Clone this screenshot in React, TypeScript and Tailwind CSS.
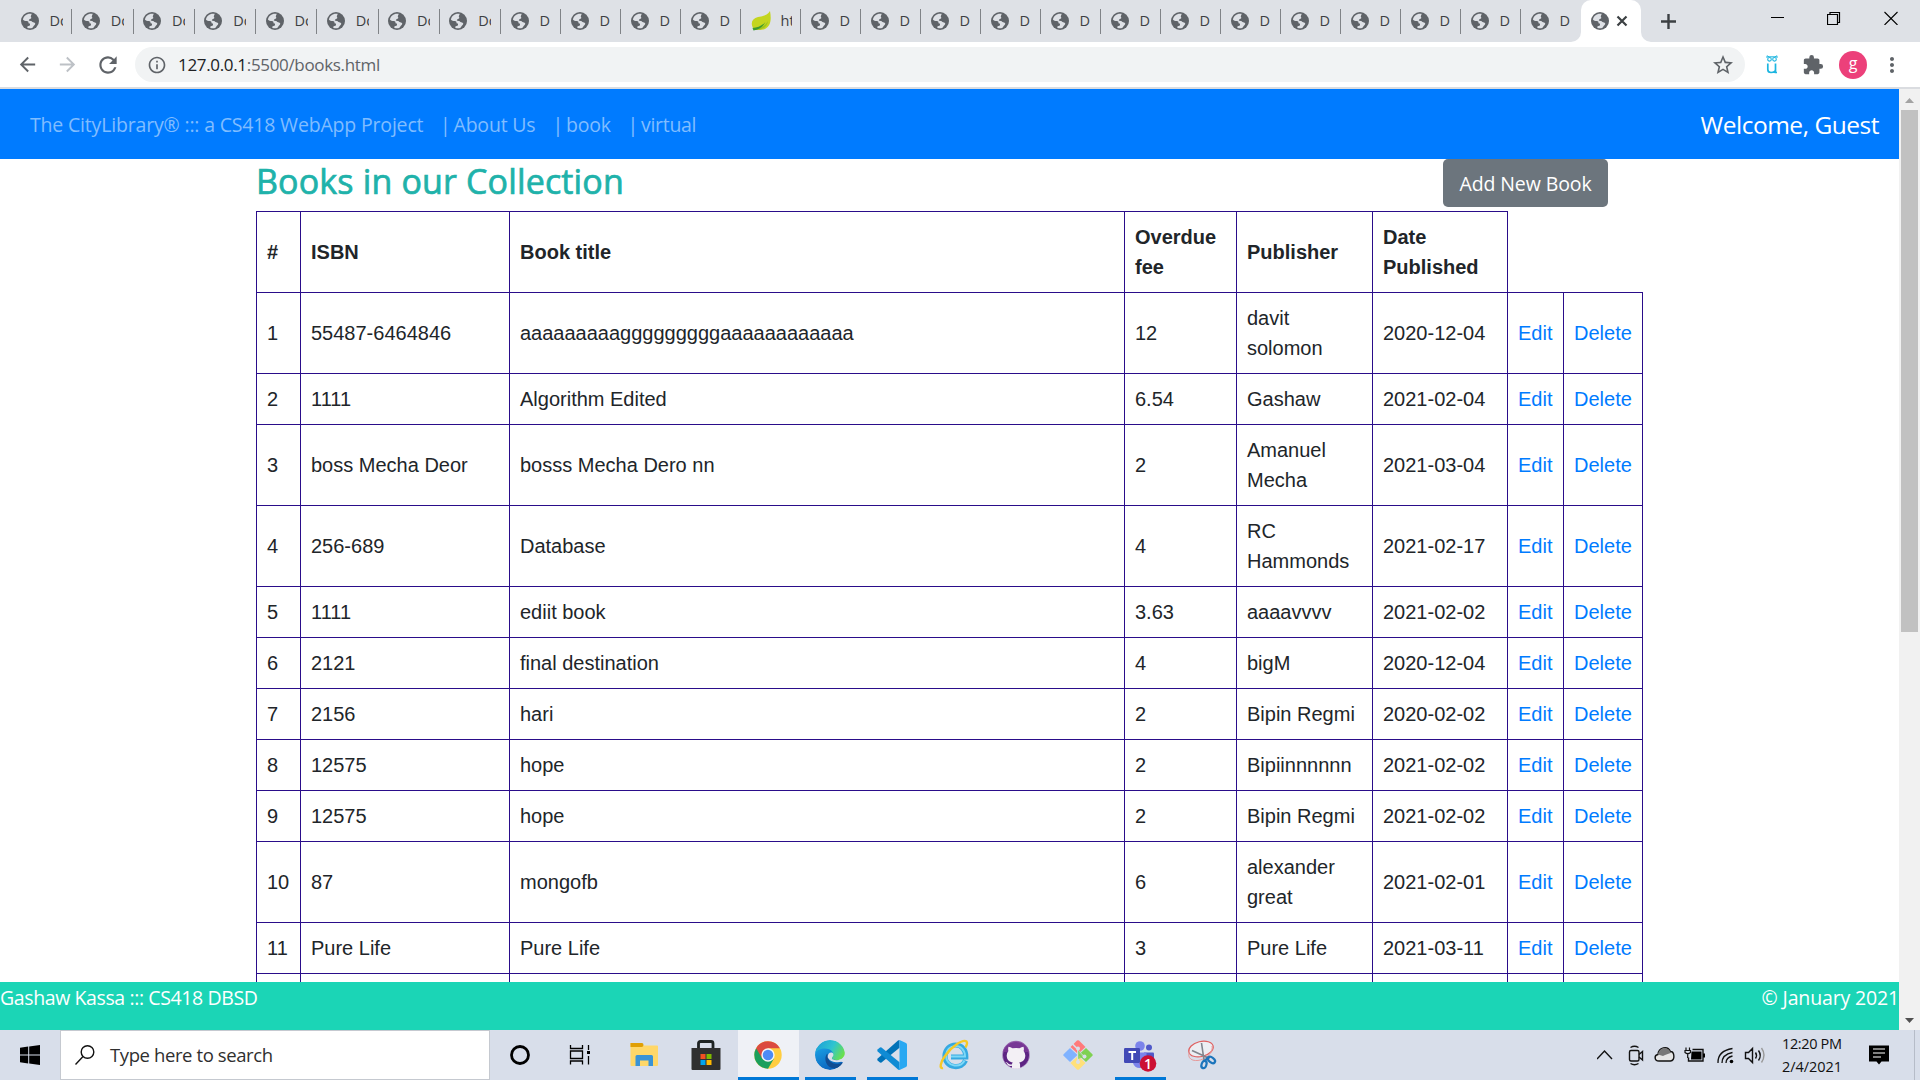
import type { ReactNode } from 'react'
import { MdRefresh, MdStarOutline, MdExtension, MdMoreVert, MdArrowBack, MdArrowForward, MdInfoOutline } from 'react-icons/md'

const UI = "font-['Open_Sans',sans-serif]"

const books = [
  ['1', '55487-6464846', 'aaaaaaaaagggggggggaaaaaaaaaaaa', '12', 'davit solomon', '2020-12-04'],
  ['2', '1111', 'Algorithm Edited', '6.54', 'Gashaw', '2021-02-04'],
  ['3', 'boss Mecha Deor', 'bosss Mecha Dero nn', '2', 'Amanuel Mecha', '2021-03-04'],
  ['4', '256-689', 'Database', '4', 'RC Hammonds', '2021-02-17'],
  ['5', '1111', 'ediit book', '3.63', 'aaaavvvv', '2021-02-02'],
  ['6', '2121', 'final destination', '4', 'bigM', '2020-12-04'],
  ['7', '2156', 'hari', '2', 'Bipin Regmi', '2020-02-02'],
  ['8', '12575', 'hope', '2', 'Bipiinnnnnn', '2021-02-02'],
  ['9', '12575', 'hope', '2', 'Bipin Regmi', '2021-02-02'],
  ['10', '87', 'mongofb', '6', 'alexander great', '2021-02-01'],
  ['11', 'Pure Life', 'Pure Life', '3', 'Pure Life', '2021-03-11'],
]

const headers = ['#', 'ISBN', 'Book title', 'Overdue fee', 'Publisher', 'Date Published']

function Globe() {
  return (
    <svg viewBox="0 0 18 18" className="h-[18px] w-[18px] shrink-0">
      <circle cx="9" cy="9" r="9" fill="#5f6368" />
      <path
        d="M10.6 1.8C6 1 2.6 3.8 1.9 7.6c.9 1 2.200 1.500 3.900 1.500 1.500 0 1.600.8 1.700 1.700.1.600.7.800 1.500.900v1.400c0 .8-1.300 1-2.200 1.100-.5 0-.6.8-.5 1.600 1.600.700 3.200.700 4.800.2 1-.7 1.300-1.500 1.800-2.200.6-.8 1.400-1.200 1.300-2.200-.1-.9-1-1.300-2-1.400-1-.1-1.300-.8-2-1.200-.7-.3-1.900.1-2.300-.5-.3-.6.4-1.300 1.100-1.600.8-.300 1.200-.4 1.300-1 .1-.7-.6-1-.5-1.600.1-.7.600-1.300.8-2.100z"
        fill="#dee1e6"
      />
    </svg>
  )
}

function Leaf() {
  return (
    <svg viewBox="0 0 20 20" className="h-5 w-5 shrink-0">
      <path d="M19 0c1.500 8 1 15-5 18-4 1.500-8 1-11.500 0C-1 12 1 7.500 7 6 12 5 16.500 4.500 19 0z" fill="#c4d51f" />
      <path d="M3 18.500c6-.5 11-3.500 14-8.500-1 6.500-6 9.500-14 8.500z" fill="#9cc31f" />
      <path d="M1.500 17c5-.5 9.500-2 13-6-2.500 5-6.500 7.500-12 8.500z" fill="#3d9a2f" />
    </svg>
  )
}

function TabStrip() {
  return (
    <div className="flex h-[42px] w-full bg-[#dee1e6] pl-[11px]">
      {Array.from({ length: 26 }, (_, i) => (
        <div key={i} className={`flex h-full shrink-0 items-center ${i < 8 ? 'w-[61.25px]' : 'w-[60px]'}`}>
          <div className="flex h-full min-w-0 flex-1 items-center overflow-hidden pl-[9.5px]">
            {i === 12 ? <Leaf /> : <Globe />}
            <span
              className={`flex h-5 items-center overflow-hidden text-[14.500px] text-[#3c4043] ${UI} ${i === 12 ? 'ml-[10px] w-[11px]' : i < 8 ? 'ml-[11px] w-[13px]' : 'ml-[11px] w-[11px]'}`}
            >
              {i === 12 ? 'ht' : i < 8 ? 'Do' : 'D'}
            </span>
          </div>
          {i < 25 && <div className="h-[25px] w-px bg-[#808387]" />}
        </div>
      ))}
      <div className="relative flex h-full w-[60px] shrink-0 items-center rounded-t-[10px] bg-white pl-[10px]">
        <svg viewBox="0 0 80 10" className="absolute bottom-0 -left-[10px] h-[10px] w-[80px]">
          <path d="M0 10A10 10 0 0 0 10 0V10zM80 10A10 10 0 0 1 70 0V10z" fill="#fff" />
        </svg>
        <Globe />
        <svg viewBox="0 0 12 12" className="ml-[7px] h-3 w-3">
          <path d="M1.500 1.500l9 9M10.500 1.500l-9 9" stroke="#3c4043" strokeWidth="2.200" />
        </svg>
      </div>
      <svg viewBox="0 0 15 15" className="mt-[13.500px] ml-[20px] h-[15px] w-[15px]">
        <path d="M7.500 0v15M0 7.500h15" stroke="#3c4043" strokeWidth="2.400" />
      </svg>
      <div className="mt-[11px] mr-[21px] ml-auto flex items-start">
        <svg viewBox="0 0 14 14" className="mr-[42px] h-[14px] w-[14px]">
          <path d="M0 6.500h13" stroke="#000" />
        </svg>
        <svg viewBox="0 0 14 14" className="mr-[43px] h-[14px] w-[14px]">
          <path d="M.5 3.500h10v10H.5zM3 3V1.500h9.500v10H11" fill="none" stroke="#000" strokeWidth="1.200" />
        </svg>
        <svg viewBox="0 0 14 14" className="mr-px h-[14px] w-[14px]">
          <path d="M.5 1l13 13M13.500 1L.5 14" stroke="#000" strokeWidth="1.100" />
        </svg>
      </div>
    </div>
  )
}

function Toolbar() {
  return (
    <div className="flex h-[47px] w-full items-center border-b-2 border-[#dadce0] bg-white pl-[16px] text-[#5f6368]">
      <MdArrowBack className="h-[23px] w-[23px]" />
      <MdArrowForward className="ml-[17px] h-[23px] w-[23px] text-[#bdc1c6]" />
      <MdRefresh className="ml-[16px] h-[26px] w-[26px]" />
      <div className="ml-[14px] flex h-[35px] w-[1610px] items-center rounded-full bg-[#f1f3f4] pr-[10px] pl-[12px]">
        <MdInfoOutline className="h-5 w-5" />
        <div className={`ml-[11px] text-[17px] tracking-[-0.33px] ${UI}`}>
          <span className="text-[#202124]">127.0.0.1</span>:5500/books.html
        </div>
        <MdStarOutline className="ml-auto h-6 w-6" />
      </div>
      <svg viewBox="0 0 12 19" className="ml-[21px] h-[19px] w-3">
        <g fill="none" stroke="#1cb5e0">
          <circle cx="3.500" cy="4.300" r="1.800" strokeWidth="1.100" />
          <circle cx="8.500" cy="4.300" r="1.800" strokeWidth="1.100" />
          <path d="M1 3V.8L3 1.800h6L11 .8V3" strokeWidth="1" />
          <path d="M1.800 8.500v6q0 3 3.200 3 4.500 0 4.500-3V8.500v9h1.500" strokeWidth="1.700" />
        </g>
      </svg>
      <MdExtension className="ml-[24px] h-[22px] w-[22px]" />
      <div className={`ml-[15px] flex h-7 w-7 items-center justify-center rounded-full bg-[#ec407a] pb-[3px] text-[16px] leading-none text-white ${UI}`}>g</div>
      <MdMoreVert className="ml-[13px] h-6 w-6" />
    </div>
  )
}

function NavLink({ children, className }: { children: ReactNode; className: string }) {
  return (
    <a className={`flex whitespace-nowrap ${className}`}>
      <span className="flex w-[15px] pl-[1.500px]">|</span>
      <span>{children}</span>
    </a>
  )
}

function Navbar() {
  return (
    <nav className={`flex h-[70px] shrink-0 items-center bg-[#007bff] pt-[2px] pr-[20px] pl-[30px] text-[19.500px] text-[#80bdff] ${UI}`}>
      <a className="w-[408.500px] tracking-[-0.18px] whitespace-nowrap">The CityLibrary® ::: a CS418 WebApp Project</a>
      <NavLink className="w-[112.500px] tracking-[-0.2px]">About Us</NavLink>
      <NavLink className="w-[75px] tracking-[-0.2px]">book</NavLink>
      <NavLink className="tracking-[-0.3px]">virtual</NavLink>
      <span className="ml-auto pt-px text-[24.500px] tracking-[-0.480px] text-white">Welcome, Guest</span>
    </nav>
  )
}

const cell = 'border-t border-l border-[#2a0d8a] px-[10px] py-[10px]'

function BookTable() {
  return (
    <table className="w-[1387px] shrink-0 table-fixed border-separate border-spacing-0 text-left font-['Liberation_Sans',Arial,sans-serif] text-[20px] leading-[30px] text-[#212529]">
      <colgroup>
        <col className="w-[44px]" />
        <col className="w-[209px]" />
        <col className="w-[615px]" />
        <col className="w-[112px]" />
        <col className="w-[136px]" />
        <col className="w-[135px]" />
        <col className="w-[56px]" />
        <col className="w-[80px]" />
      </colgroup>
      <thead>
        <tr className="h-[81px]">
          {headers.map((h) => (
            <th key={h} className={`${cell} font-bold`}>{h}</th>
          ))}
          <th className="border-l border-[#2a0d8a]" />
          <th />
        </tr>
      </thead>
      <tbody>
        {books.map((b) => (
          <tr key={b[0]}>
            {b.map((v, i) => (
              <td key={i} className={cell}>{v}</td>
            ))}
            <td className={`${cell} text-[#007bff]`}>Edit</td>
            <td className={`${cell} border-r text-[#007bff]`}>Delete</td>
          </tr>
        ))}
        <tr className="h-[51px]">
          {Array.from({ length: 8 }, (_, i) => (
            <td key={i} className={i === 7 ? 'border-x border-t border-[#2a0d8a]' : 'border-t border-l border-[#2a0d8a]'} />
          ))}
        </tr>
      </tbody>
    </table>
  )
}

function Page() {
  return (
    <div className="flex h-[941px] w-full bg-white">
      <div className="flex h-full w-[1899px] flex-col">
        <Navbar />
        <main className="flex h-[823px] shrink-0 flex-col overflow-hidden pl-[256px]">
          <div className="flex h-[52px] w-[1352px] shrink-0 items-start justify-between">
            <h1 className={`pt-px text-[34px] leading-[42px] tracking-[0.150px] text-[#20b2aa] [-webkit-text-stroke:0.7px_#20b2aa] ${UI}`}>Books in our Collection</h1>
            <button className={`flex h-12 w-[165px] items-center justify-center rounded-[5px] bg-[#6c757d] pt-px text-[19.500px] tracking-[-0.1px] text-white ${UI}`}>
              Add New Book
            </button>
          </div>
          <BookTable />
        </main>
        <footer className={`flex h-12 shrink-0 justify-between bg-[#1bd5b6] text-[19.500px] leading-[32px] text-white ${UI}`}>
          <span className="tracking-[-0.390px]">Gashaw Kassa ::: CS418 DBSD</span>
          <span className="tracking-[-0.150px]">© January 2021</span>
        </footer>
      </div>
      <div className="flex h-full w-[21px] flex-col items-center bg-[#f1f1f1]">
        <svg viewBox="0 0 9 5" className="mt-[9px] h-[5px] w-[9px]"><path d="M0 5L4.500 0 9 5z" fill="#a3a3a3" /></svg>
        <div className="mt-[7px] h-[522px] w-[17px] bg-[#c1c1c1]" />
        <svg viewBox="0 0 9 5" className="mt-auto mb-[7px] h-[5px] w-[9px]"><path d="M0 0L4.500 5 9 0z" fill="#505050" /></svg>
      </div>
    </div>
  )
}

function Slot({ className = '', underline, children }: { className?: string; underline?: string; children: ReactNode }) {
  return (
    <div className={`relative flex h-full shrink-0 items-center justify-center ${className}`}>
      {children}
      {underline && <div className={`absolute bottom-0 h-[3px] bg-[#0078d7] ${underline}`} />}
    </div>
  )
}

const icon = 'h-[30px] w-[30px] overflow-visible'

function AppIcons() {
  return (
    <div className="flex h-full">
      <Slot className="w-[60px]">
        <svg viewBox="0 0 30 30" className={icon}><circle cx="15" cy="15" r="8.500" fill="none" stroke="#000" strokeWidth="2.800" /></svg>
      </Slot>
      <Slot className="w-[60px]">
        <svg viewBox="0 0 30 30" className={icon}>
          <path d="M5.500 5v3.500h12V5M5.500 24.500V21h12v3.500M5.500 11h12v7.500h-12zM23.500 5v5M23.500 16v8.500" fill="none" stroke="#000" strokeWidth="1.300" />
          <rect x="22" y="11" width="3" height="3" />
        </svg>
      </Slot>
      <Slot className="w-[67px]">
        <svg viewBox="0 0 30 30" className={icon}>
          <path d="M1.500 3h10l2 2.500H28a1 1 0 0 1 1 1V25a1 1 0 0 1-1 1H2.500a1 1 0 0 1-1-1z" fill="#ffd768" />
          <path d="M1.500 3h11.500q1.500 0 1.500 2t-2 2h-11z" fill="#e09f05" />
          <path d="M6.500 26V16.500q0-1.500 1.500-1.500h14.500q1.500 0 1.500 1.500V26h-4.500v-5.500h-8.500V26z" fill="#3a93d6" />
        </svg>
      </Slot>
      <Slot className="mr-1 w-[57px]">
        <svg viewBox="0 0 30 30" className={icon}>
          <path d="M7.500 9V3.500q0-2 2-2h10.500q2 0 2 2V9" fill="none" stroke="#1e2323" strokeWidth="2.800" />
          <path d="M.5 8h29v21a1 1 0 0 1-1 1h-27a1 1 0 0 1-1-1z" fill="#303030" />
          <path d="M9.500 14h5v5h-5z" fill="#f25022" />
          <path d="M15.500 14h5v5h-5z" fill="#7fba00" />
          <path d="M9.500 20h5v5h-5z" fill="#00a4ef" />
          <path d="M15.500 20h5v5h-5z" fill="#ffb900" />
        </svg>
      </Slot>
      <Slot className="w-[61px] bg-[#eff1f6]" underline="inset-x-0">
        <svg viewBox="0 0 48 48" className="mb-px ml-[-2px] h-[28px] w-[28px]">
          <circle cx="24" cy="24" r="23.500" fill="#ffcd40" />
          <path d="M24 24L3.650 12.250A23.500 23.500 0 0 0 24 47.500l10.200-17.600z" fill="#1a9f5c" />
          <path d="M3.650 12.250A23.500 23.500 0 0 1 44.400 12.500H24l-10.200 17.200z" fill="#db4b3f" />
          <circle cx="24" cy="24" r="11.500" fill="#f5f5f5" />
          <circle cx="24" cy="24" r="9" fill="#4c8bf5" />
        </svg>
      </Slot>
      <Slot className="w-[62px]" underline="left-[6px] right-[5px]">
        <svg viewBox="0 0 30 30" className={icon}>
          <defs>
            <linearGradient id="edgeTop" x1="0" x2="1" y1=".2" y2=".6"><stop stopColor="#1c9fd8" /><stop offset=".55" stopColor="#2fc4d0" /><stop offset="1" stopColor="#6be04b" /></linearGradient>
            <linearGradient id="edgeSide" x1="0" x2=".6" y1="0" y2="1"><stop stopColor="#1aa0e4" /><stop offset="1" stopColor="#0a62bd" /></linearGradient>
            <clipPath id="edgeDisc"><circle cx="15" cy="15" r="15" /></clipPath>
          </defs>
          <g clipPath="url(#edgeDisc)">
            <path d="M0 8h20l-2 9 10 5.500Q22 30 15 30A15 15 0 0 1 0 15z" fill="url(#edgeSide)" />
            <path d="M.2 13C1.500 4.800 8 0 15 0c8.500 0 15 5.600 15 12.300 0 4.800-3.600 7.900-8.200 7.900-3.700 0-4.800-1.100-4.800-2.100 0-.9 1.300-1.500 1.300-3.600 0-3.100-3.500-6-8.300-6C5.500 8.500 1.500 10.300.2 13z" fill="url(#edgeTop)" />
            <path d="M12.500 13.500C9.500 15.500 9.500 23 14 26.500c4 3 9.500 2 13.500-2.500.6-.7 0-1.500-.9-1-5.600 2.800-13.600-.5-14.100-7z" fill="#124d92" />
            <path d="M30 19c-2 3-5 3.500-9 3.200-4-.3-7-2.200-8.300-5 0-3 1.500-5 4-4.700 1.800.4 2.200 2.500 1 4.300-1 1.200-1.200 2 .3 2.700 2.500 1 8 1.500 12-3z" fill="#d8deea" />
          </g>
        </svg>
      </Slot>
      <Slot className="w-[62px]" underline="left-[6px] right-[5px]">
        <svg viewBox="0 0 30 30" className={icon}>
          <path d="M22.500 0v7.800L4.500 22.500Q3.500 23 2.600 22.300L.6 20.500Q-.2 19.500.7 18.500L21 .5z" fill="#0072b8" />
          <path d="M22.500 30v-7.800L4.500 7.500Q3.500 7 2.600 7.700L.6 9.500Q-.2 10.500.7 11.500L21 29.500z" fill="#0f8bd4" />
          <path d="M22.500 0l6.500 3q1 .5 1 1.800v20.400q0 1.300-1 1.800l-6.500 3-1.500-.5 1.500-2z" fill="#29a8f2" />
        </svg>
      </Slot>
      <Slot className="w-[61px]">
        <svg viewBox="0 0 30 30" className={icon}>
          <path d="M26.500 20.500C24.500 25 20 27 15.500 26.500 9.500 26 5.500 21 6 15.500 6.500 9 11 5 16.500 5c6 0 10.500 4.500 10.300 12H12" fill="none" stroke="#36a9e1" strokeWidth="5.200" />
          <path d="M25.500 20.500C23.500 24.500 20 26 15.500 25.500 10.500 25 7 21 7 15.500 7.500 10 11 6.500 16.500 6c5.500 0 9.500 4 9.500 10.500H12" fill="none" stroke="#7fd8f7" strokeWidth="2" />
          <path d="M4 28c-4 1-2.500-6 2-12C12 7 24-1.500 27.500 1.500c1.500 1.500 0 4-1 6" fill="none" stroke="#f6c927" strokeWidth="2.400" />
        </svg>
      </Slot>
      <Slot className="w-[63px]">
        <svg viewBox="0 0 30 30" className={icon}>
          <circle cx="15" cy="15" r="13.600" fill="#5d2483" stroke="#d1b7dc" strokeWidth=".5" />
          <path d="M1.700 12A13.500 13.500 0 0 1 28.300 12Z" fill="#83409c" opacity=".7" />
          <path d="M7.500 6.800q2 0 4 1.500 3.500-.8 7 0 2-1.500 4-1.500.8 2.200.1 4.100 1.700 2 1.700 4.600c0 4.500-2.800 6.500-6.100 7 .9 1 .9 2 .9 3.200v2.500Q15 29.500 11 28.200v-2.500c-3 .7-4.500-.7-5.200-2.500l-1.300-1.200c2 0 2.500 2 4 2.300q1.500.2 2.500-.1 0-1 .8-1.700c-3.300-.5-6.100-2.500-6.100-7q0-2.600 1.700-4.600-.6-1.900.1-4.100z" fill="#f3f0f5" />
        </svg>
      </Slot>
      <Slot className="w-[62px]">
        <svg viewBox="0 0 30 30" className={icon}>
          <path d="M14 .6q1-.9 2 0l6.500 6.500-7.500 7-7.500-7z" fill="#ff7b7b" />
          <path d="M7 8l7.500 7L7 22 .6 15.800q-.8-.8 0-1.600z" fill="#7fb2ff" />
          <path d="M23 8l6.400 6.200q.8.800 0 1.600L23 22l-7.500-7z" fill="#7fd152" />
          <path d="M15 16l7.500 7-6.500 6.400q-1 .9-2 0L7.500 23z" fill="#ffe07a" />
          <g fill="none" stroke="#d8deea" strokeWidth="1.700"><path d="M9 3.500l6 6v14M15 11l7 7" /></g>
          <path d="M15 10v9l6-2z" fill="#7fd152" opacity=".75" />
          <circle cx="15" cy="8.500" r="2" fill="#d8deea" /><circle cx="15" cy="22" r="2" fill="#d8deea" /><circle cx="21.500" cy="16.500" r="2" fill="#d8deea" />
        </svg>
      </Slot>
      <Slot className="w-[62px]" underline="left-[6px] right-[5px]">
        <svg viewBox="0 0 32 30" className="h-[30px] w-8 overflow-visible">
          <circle cx="16" cy="6" r="4.800" fill="#7b83eb" />
          <circle cx="25" cy="7.500" r="3" fill="#5059c9" />
          <path d="M20 12.500h9q1 0 1 1V20q-2 5-8 4z" fill="#5059c9" />
          <path d="M9 12.500h13.500V22q-1 6-7 6-5 0-6.500-5z" fill="#7b83eb" />
          <rect y="8" width="16" height="15" rx="1.200" fill="#4149b6" />
          <path d="M4.500 12h7.500M8.200 12v8" stroke="#fff" strokeWidth="2" />
          <circle cx="24" cy="23.500" r="8.300" fill="#cc1033" />
          <text x="24" y="28.500" textAnchor="middle" fontSize="14" fontWeight="600" fill="#fff" fontFamily="Open Sans">1</text>
        </svg>
      </Slot>
      <Slot className="w-[61px]">
        <svg viewBox="0 0 30 30" className={icon}>
          <ellipse cx="14" cy="9" rx="12.500" ry="7.500" transform="rotate(-14 14 9)" fill="#eceef3" stroke="#df6060" strokeWidth="1.200" />
          <path d="M2 13c-2 8 8 9 14 6 7-3 10-9 9-13" fill="none" stroke="#e69a9a" strokeWidth="1" />
          <path d="M5 10.500l17.500 8M14.500 3L17 20" stroke="#80858d" strokeWidth="1.600" />
          <g fill="none" stroke="#1c75bc" strokeWidth="2.200">
            <ellipse cx="17" cy="24.500" rx="2.400" ry="3.800" transform="rotate(18 17 24.500)" />
            <ellipse cx="24.500" cy="20" rx="4" ry="2.500" transform="rotate(38 24.500 20)" />
            <path d="M17.500 21l4-4" />
          </g>
        </svg>
      </Slot>
    </div>
  )
}

function Tray() {
  return (
    <div className="mr-[5px] ml-auto flex h-full items-center">
      <svg viewBox="0 0 318 50" className="h-[50px] w-[318px]" fill="none" stroke="#111" strokeWidth="1.400">
        <path d="M0 29l7.500-8 7.500 8" />
        <rect x="32.500" y="20.500" width="9.500" height="10.500" rx="1.500" />
        <path d="M42 24.500l3.500-3v8.500l-3.500-3M33.500 17.500q4-2.500 8 0M33.500 33.500q4 2.500 8 0" />
        <path d="M62 31c-5 0-5-6-1-6.500.5-7 9.500-9.500 12.500-3 4 0 5 9 0 9.500z" fill="#e5e5e5" />
        <path d="M61 24.500c1-7.500 9.500-9 12.500-2.500l1.500.5L68 25l-2 1z" fill="#777" stroke="none" />
        <path d="M95.500 19.500h10.500v11.500H91.500v-3.500" />
        <path d="M94.500 21.500h10v8H94zM106 23.500h2v4h-2z" fill="#000" stroke="none" />
        <path d="M89 17.500v3M92.500 17.500v3M88 20.500h5.500v2q-2.800 2.500-5.500 0zM90.700 24v4" strokeWidth="1.200" />
        <path d="M121 33q-.500-12 14.500-14.500M125 33q0-8.500 10.500-10.500M129 33q0-5.500 6.500-7" strokeWidth="1.300" />
        <circle cx="134.500" cy="31.500" r="1.800" fill="#000" stroke="none" />
        <path d="M148.500 22.500h3l4-4v14l-4-4h-3zM158.500 22.500q2 3 0 6M161.500 20.500q3.500 5 0 10" />
        <path d="M164.500 18q5 7 0 14.500" stroke="#999" />
        <path d="M272 15.500h20v16h-7.500l-2.500 3-2.500-3H272z" fill="#000" stroke="none" />
        <path d="M276 19h12M276 23h12M276 27h8" stroke="#fff" strokeWidth="1.200" />
        <path d="M317.500 0v50" stroke="#b6bcc8" strokeWidth="1" />
        <g className={UI} fill="#111" stroke="none" fontSize="14.500">
          <text x="185" y="19.200" textLength="60">12:20 PM</text>
          <text x="185" y="42.200" textLength="60">2/4/2021</text>
        </g>
      </svg>
    </div>
  )
}

function Taskbar() {
  return (
    <div className="flex h-[50px] w-full bg-[#d8deea]">
      <div className="flex h-full w-[60px] items-center justify-center">
        <svg viewBox="0 0 20 20" className="h-5 w-5">
          <path d="M0 2.800l8.200-1.200v8H0zM9.200 1.400L20 0v9.600H9.200zM0 10.500h8.200v8L0 17.300zM9.200 10.500H20V20L9.200 18.600z" />
        </svg>
      </div>
      <div className="flex h-full w-[430px] items-center border border-[#c5c9d0] bg-white pl-[14px]">
        <svg viewBox="0 0 20 20" className="h-5 w-5" fill="none" stroke="#111" strokeWidth="1.400">
          <circle cx="12.500" cy="7" r="6.300" />
          <path d="M8 11.500L.5 19.500" />
        </svg>
        <span className={`ml-[15px] text-[18.500px] tracking-[-0.400px] text-[#2f2f2f] ${UI}`}>Type here to search</span>
      </div>
      <AppIcons />
      <Tray />
    </div>
  )
}

export default function App() {
  return (
    <div className="flex h-[1080px] w-[1920px] flex-col overflow-hidden bg-white">
      <TabStrip />
      <Toolbar />
      <Page />
      <Taskbar />
    </div>
  )
}
